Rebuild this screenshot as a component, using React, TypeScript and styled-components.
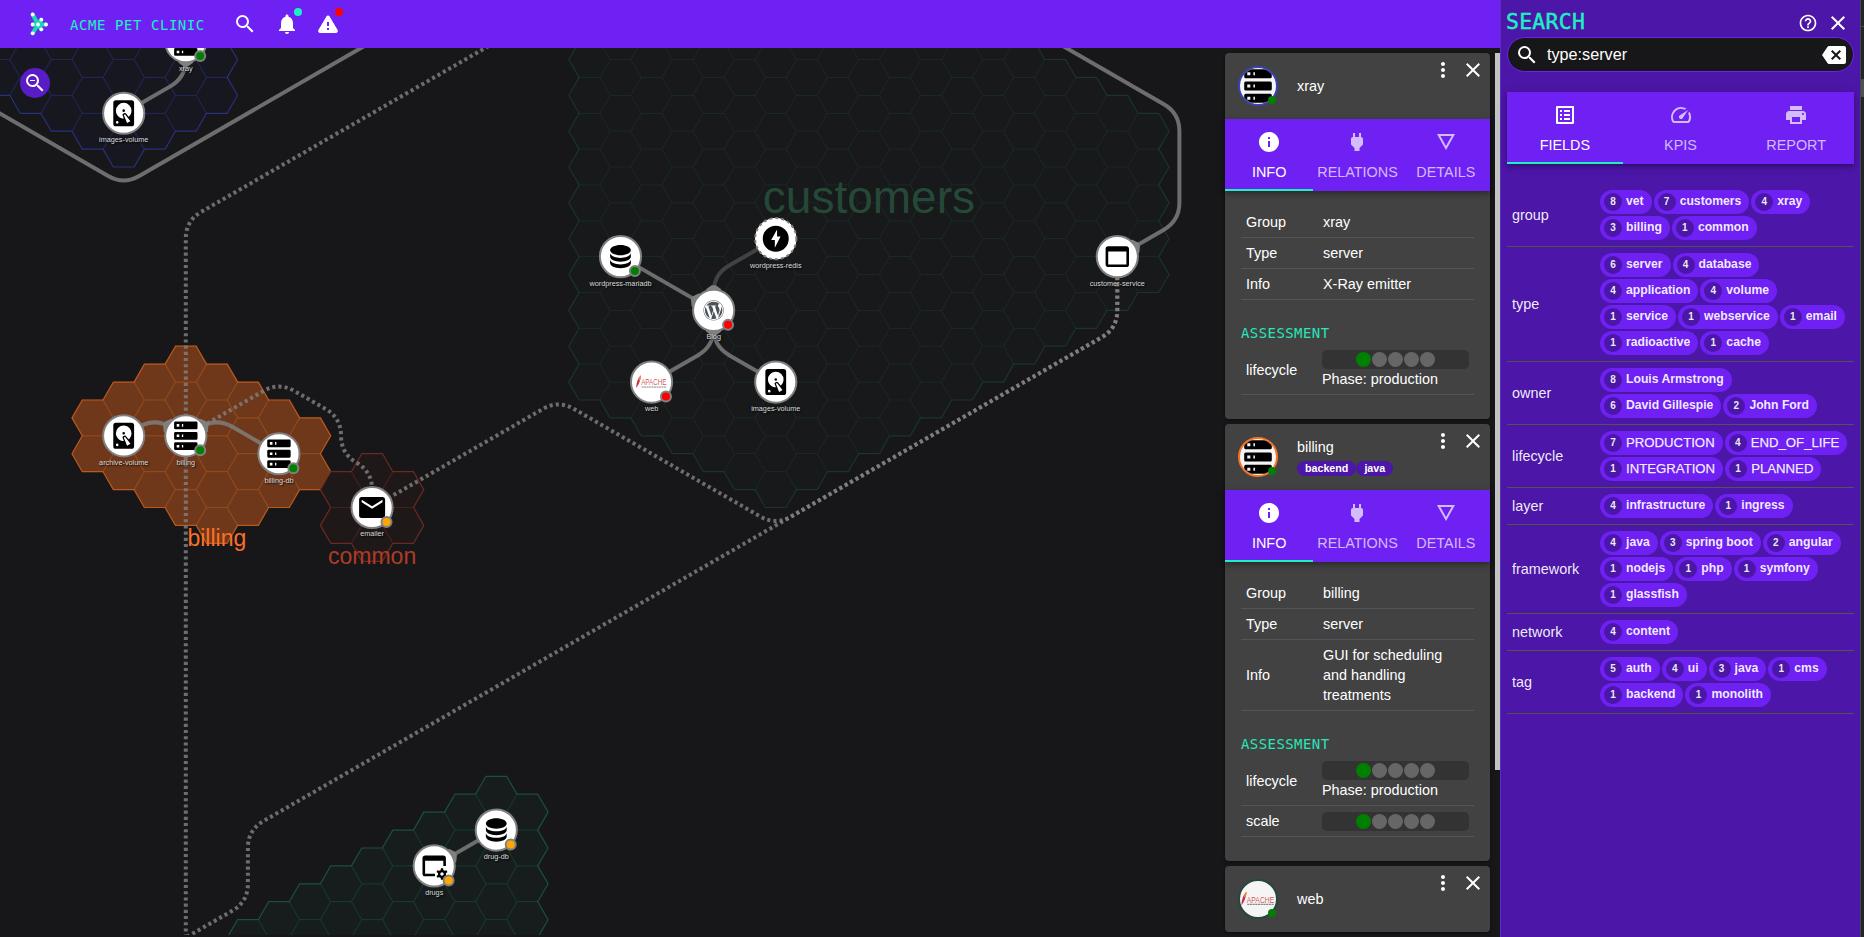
import React from 'react';
import styled, { createGlobalStyle, css } from 'styled-components';
import {
  MdSearch, MdNotifications, MdZoomOut, MdMoreVert, MdClose, MdInfo, MdPower,
  MdHelpOutline, MdBackspace, MdListAlt, MdSpeed, MdPrint,
} from 'react-icons/md';
import { FaWordpress } from 'react-icons/fa';

const violet = '#6f21f3';
const deep = '#4c16a8';
const mint = '#1df0c1';
const dark = '#171719';
const sans = '"Liberation Sans", Arial, sans-serif';
const mono = '"DejaVu Sans Mono", monospace';

const GlobalStyle = createGlobalStyle`
  * { box-sizing: border-box; }
  body { margin: 0; background: ${dark}; font-family: ${sans}; font-size: 14.4px; color: #fff; overflow: hidden; }
`;

/* ---------- page frame ---------- */

const Page = styled.div`
  display: flex;
  width: 1864px;
  height: 937px;
  background: ${dark};
`;

const Workspace = styled.div`
  display: flex;
  flex-direction: column;
  flex: 1;
  min-width: 0;
`;

const TopBar = styled.header`
  display: flex;
  align-items: center;
  height: 48px;
  flex: none;
  padding-left: 27px;
  background: ${violet};
`;

const BrandName = styled.h1`
  margin: 1px 0 0 19px;
  width: 163px;
  font: 400 14px/20px ${mono};
  letter-spacing: 0.56px;
  color: ${mint};
  white-space: nowrap;
`;

const BarButton = styled.button<{ $gap?: number }>`
  position: relative;
  display: flex;
  margin: 0 ${p => p.$gap ?? 18}px 0 0;
  padding: 0;
  border: 0;
  background: none;
  color: #fff;
`;

const Badge = styled.i<{ $color: string }>`
  position: absolute;
  top: -4px;
  right: -3px;
  width: 8px;
  height: 8px;
  border-radius: 50%;
  background: ${p => p.$color};
`;

const Stage = styled.main`
  position: relative;
  display: flex;
  justify-content: flex-end;
  flex: 1;
  min-height: 0;
  overflow: hidden;
`;

const Canvas = styled.svg`
  position: absolute;
  inset: 0;
  display: block;
`;

const ZoomButton = styled.button`
  position: absolute;
  left: 20px;
  top: 20px;
  display: grid;
  place-items: center;
  width: 30px;
  height: 30px;
  padding: 0;
  border: 0;
  border-radius: 50%;
  background: #5a1cc6;
  color: #fff;
`;

/* ---------- topology ---------- */

const COL = 31.05;
const ROW = 17.92;
const px = (c: number) => 123.7 + COL * c;
const py = (k: number) => 113.25 + ROW * k;

type Column = [col: number, from: number, to: number];

interface Region {
  fill: string;
  inner: string;
  outer: string;
  columns: Column[];
}

const regions: Region[] = [
  {
    fill: '#171720', inner: '#20264f', outer: '#28317c',
    columns: [[-4, -6, -2], [-3, -5, -1], [-2, -6, 0], [-1, -5, 1], [0, -6, 2], [1, -5, 1], [2, -6, 0], [3, -5, -1]],
  },
  {
    fill: '#17191b', inner: '#1a2726', outer: '#1a342e',
    columns: [
      [15, -5, 15], [16, -6, 16], [17, -5, 17], [18, -6, 18], [19, -5, 19], [20, -6, 20], [21, -5, 21],
      [22, -6, 20], [23, -5, 19], [24, -6, 18], [25, -5, 17], [26, -6, 16], [27, -5, 15], [28, -6, 14],
      [29, -3, 13], [30, -2, 12], [31, -1, 11], [32, 0, 10], [33, 1, 9],
    ],
  },
  {
    fill: '#6f381b', inner: '#91491e', outer: '#b9591f',
    columns: [[-1, 17, 19], [0, 16, 20], [1, 15, 21], [2, 14, 22], [3, 15, 23], [4, 16, 22], [5, 17, 21], [6, 18, 20]],
  },
  {
    fill: '#1e1819', inner: '#46201e', outer: '#6b2a22',
    columns: [[7, 21, 23], [8, 20, 24], [9, 21, 23]],
  },
  {
    fill: '#171c1c', inner: '#17382c', outer: '#1a5239',
    columns: [[4, 46, 48], [5, 45, 47], [6, 44, 48], [7, 43, 47], [8, 42, 48], [9, 41, 47], [10, 40, 48], [11, 39, 47], [12, 38, 48], [13, 39, 47]],
  },
];

function HexRegion({ region }: { region: Region }) {
  const size = COL / 1.5;
  const edges = new Map<string, { d: string; n: number }>();
  let fill = '';
  region.columns.forEach(([c, from, to]) => {
    for (let k = from; k <= to; k += 2) {
      const x = px(c);
      const y = py(k);
      const pts = [
        [x + size, y], [x + size / 2, y + ROW], [x - size / 2, y + ROW],
        [x - size, y], [x - size / 2, y - ROW], [x + size / 2, y - ROW],
      ].map(([a, b]) => `${a.toFixed(1)},${b.toFixed(1)}`);
      fill += `M${pts.join('L')}Z`;
      pts.forEach((p, i) => {
        const q = pts[(i + 1) % 6];
        const mx = Math.round((parseFloat(p) + parseFloat(q)) / 2);
        const my = Math.round((parseFloat(p.split(',')[1]) + parseFloat(q.split(',')[1])) / 2);
        let key = `${mx}:${my}`;
        for (let dx = -1; dx <= 1; dx++) {
          for (let dy = -1; dy <= 1; dy++) {
            if (edges.has(`${mx + dx}:${my + dy}`)) key = `${mx + dx}:${my + dy}`;
          }
        }
        const seen = edges.get(key);
        if (seen) seen.n += 1;
        else edges.set(key, { d: `M${p}L${q}`, n: 1 });
      });
    }
  });
  const all = [...edges.values()];
  return (
    <g fill="none" strokeWidth="1.2" strokeLinecap="round">
      <path d={fill} fill={region.fill} stroke={region.fill} strokeWidth="0.5" />
      <path d={all.filter(e => e.n > 1).map(e => e.d).join('')} stroke={region.inner} />
      <path d={all.filter(e => e.n === 1).map(e => e.d).join('')} stroke={region.outer} />
    </g>
  );
}

interface Relation {
  via: [number, number][];
  dotted?: boolean;
  faint?: boolean;
  tip?: boolean;
}

const relations: Relation[] = [
  { via: [[-6, -2], [0, 4], [10, -6]] },
  { via: [[2, -4], [2, -2], [0, 0]], tip: true },
  { via: [[14, -6], [2, 6], [2, 48]], dotted: true },
  { via: [[1, 47], [4, 44], [4, 40], [21, 23], [32, 12], [32, 8]], dotted: true },
  { via: [[8, 22], [14, 16], [21, 23], [32, 12], [32, 8]], dotted: true },
  { via: [[2, 18], [5, 15], [7, 17], [7, 19], [8, 20], [8, 22]], dotted: true },
  { via: [[2, 18], [1, 17], [0, 18]], tip: true },
  { via: [[2, 18], [3, 17], [5, 19]], tip: true },
  { via: [[32, 8], [34, 6], [34, 0], [28, -6]], tip: true },
  { via: [[19, 11], [16, 8]], tip: true },
  { via: [[19, 11], [19, 9], [21, 7]], tip: true, faint: true },
  { via: [[19, 11], [19, 13], [17, 15]], tip: true },
  { via: [[19, 11], [19, 13], [21, 15]], tip: true },
  { via: [[10, 42], [12, 40]], tip: true },
];

function RelationLine({ via, dotted, faint, tip }: Relation) {
  const pts = via.map(([c, k]) => [px(c), py(k)]);
  const toward = (a: number[], b: number[], d: number) => {
    const len = Math.hypot(b[0] - a[0], b[1] - a[1]);
    return [a[0] + ((b[0] - a[0]) * d) / len, a[1] + ((b[1] - a[1]) * d) / len];
  };
  let d = `M${pts[0]}`;
  for (let i = 1; i < pts.length - 1; i++) {
    d += `L${toward(pts[i], pts[i - 1], 17.9)}Q${pts[i]} ${toward(pts[i], pts[i + 1], 17.9)}`;
  }
  d += `L${pts[pts.length - 1]}`;
  const angle = (Math.atan2(pts[1][1] - pts[0][1], pts[1][0] - pts[0][0]) * 180) / Math.PI;
  return (
    <g>
      <path
        d={d}
        fill="none"
        stroke={faint ? '#424244' : '#808080'}
        strokeOpacity={faint ? 1 : 0.82}
        strokeWidth="4"
        strokeDasharray={dotted ? '3.1 3.1' : undefined}
      />
      {tip && (
        <path
          d="M17,-9L21.5,-7L25,-2V2L21.5,7L17,9Z"
          fill="#808080"
          transform={`translate(${pts[0]}) rotate(${angle})`}
        />
      )}
    </g>
  );
}

const glyphs = {
  disk: 'M6,2H18A2,2 0 0,1 20,4V20A2,2 0 0,1 18,22H6A2,2 0 0,1 4,20V4A2,2 0 0,1 6,2M12,4A6,6 0 0,0 6,10C6,13.31 8.69,16 12.1,16L11.22,13.77C10.95,13.29 11.11,12.68 11.59,12.4L12.45,11.9C12.93,11.63 13.54,11.79 13.82,12.27L15.74,14.69C17.12,13.59 18,11.9 18,10A6,6 0 0,0 12,4M12,9A1,1 0 0,1 13,10A1,1 0 0,1 12,11A1,1 0 0,1 11,10A1,1 0 0,1 12,9M7,18A1,1 0 0,0 6,19A1,1 0 0,0 7,20A1,1 0 0,0 8,19A1,1 0 0,0 7,18M12.09,13.27L14.58,19.58L17.17,18.08L12.95,12.77L12.09,13.27Z',
  database: 'M12,3C7.58,3 4,4.79 4,7C4,9.21 7.58,11 12,11C16.42,11 20,9.21 20,7C20,4.79 16.42,3 12,3M4,9V12C4,14.21 7.58,16 12,16C16.42,16 20,14.21 20,12V9C20,11.21 16.42,13 12,13C7.58,13 4,11.21 4,9M4,14V17C4,19.21 7.58,21 12,21C16.42,21 20,19.21 20,17V14C20,16.21 16.42,18 12,18C7.58,18 4,16.21 4,14Z',
  server: 'M4,1H20A1,1 0 0,1 21,2V6A1,1 0 0,1 20,7H4A1,1 0 0,1 3,6V2A1,1 0 0,1 4,1M4,9H20A1,1 0 0,1 21,10V14A1,1 0 0,1 20,15H4A1,1 0 0,1 3,14V10A1,1 0 0,1 4,9M4,17H20A1,1 0 0,1 21,18V22A1,1 0 0,1 20,23H4A1,1 0 0,1 3,22V18A1,1 0 0,1 4,17M9,5H10V3H9V5M9,13H10V11H9V13M9,21H10V19H9V21M5,3V5H7V3H5M5,11V13H7V11H5M5,19V21H7V19H5Z',
  email: 'M20,8L12,13L4,8V6L12,11L20,6M20,4H4C2.89,4 2,4.89 2,6V18A2,2 0 0,0 4,20H20A2,2 0 0,0 22,18V6C22,4.89 21.1,4 20,4Z',
  window: 'M19,4C20.11,4 21,4.9 21,6V18A2,2 0 0,1 19,20H5C3.89,20 3,19.1 3,18V6A2,2 0 0,1 5,4H19M19,18V8H5V18H19Z',
  flash: 'M12,2A10,10 0 0,1 22,12A10,10 0 0,1 12,22A10,10 0 0,1 2,12A10,10 0 0,1 12,2M13,5L8.5,13H11.3V19L15.7,10.4H13V5Z',
  windowPart: 'M21,12V6A2,2 0 0,0 19,4H5C3.89,4 3,4.9 3,6V18A2,2 0 0,0 5,20H12.6V18H5V8H19V12Z',
};

type Glyph = keyof typeof glyphs | 'gear' | 'wordpress' | 'apache';

const Caption = styled.text<{ $size?: number; $color?: string }>`
  font-family: ${sans};
  font-size: ${p => p.$size ?? 7.25}px;
  fill: ${p => p.$color ?? '#dadada'};
  text-anchor: middle;
  ${p => !p.$size && css`text-shadow: 1px 1px 2px #000;`}
`;

const ApacheName = styled.text`
  font-family: ${sans};
  font-size: 8.2px;
  fill: #cf3438;
  fill-opacity: 0.85;
`;

function NodeGlyph({ kind }: { kind: Glyph }) {
  if (kind === 'wordpress') return <FaWordpress x={-10.5} y={-10.5} size={21} color="#4c545a" />;
  if (kind === 'apache') {
    return (
      <g>
        <path d="M-15.4,6C-15.2,1 -13.8,-4 -10.6,-6.8C-11,-2 -12.6,2.6 -15.4,6Z" fill="#cf2a55" />
        <path d="M-13,-2.5C-12.4,-4.6 -11.6,-6 -10.6,-6.8C-10.6,-4.5 -11,-3 -11.8,-1Z" fill="#ee8b2c" />
        <ApacheName transform="translate(-10.4 3.4) scale(0.77 1)">APACHE</ApacheName>
        <path d="M-10,5H15" stroke="#888" strokeWidth="1" strokeDasharray="2 0.5" />
      </g>
    );
  }
  if (kind === 'gear') {
    return (
      <g transform="translate(-15.6 -15.6) scale(1.3)">
        <path d={glyphs.windowPart} />
        <g transform="translate(18 18.2)">
          <circle r="2.2" fill="none" stroke="#000" strokeWidth="1.8" />
          {[0, 60, 120, 180, 240, 300].map(a => (
            <path key={a} d="M-1.1,-2.6L-0.8,-4.4H0.8L1.1,-2.6Z" transform={`rotate(${a})`} />
          ))}
        </g>
      </g>
    );
  }
  return <path d={glyphs[kind]} fillRule="evenodd" transform="translate(-15.6 -15.6) scale(1.3)" />;
}

interface TopoNode {
  at: [number, number];
  name: string;
  glyph: Glyph;
  status?: string;
  dashed?: boolean;
}

const nodes: TopoNode[] = [
  { at: [2, -4], name: 'xray', glyph: 'server', status: 'green' },
  { at: [0, 0], name: 'images-volume', glyph: 'disk' },
  { at: [0, 18], name: 'archive-volume', glyph: 'disk' },
  { at: [2, 18], name: 'billing', glyph: 'server', status: 'green' },
  { at: [5, 19], name: 'billing-db', glyph: 'server', status: 'green' },
  { at: [8, 22], name: 'emailer', glyph: 'email', status: 'orange' },
  { at: [16, 8], name: 'wordpress-mariadb', glyph: 'database', status: 'green' },
  { at: [21, 7], name: 'wordpress-redis', glyph: 'flash', dashed: true },
  { at: [19, 11], name: 'Blog', glyph: 'wordpress', status: 'red' },
  { at: [17, 15], name: 'web', glyph: 'apache', status: 'red' },
  { at: [21, 15], name: 'images-volume', glyph: 'disk' },
  { at: [32, 8], name: 'customer-service', glyph: 'window' },
  { at: [12, 40], name: 'drug-db', glyph: 'database', status: 'orange' },
  { at: [10, 42], name: 'drugs', glyph: 'gear', status: 'orange' },
];

function Topology() {
  return (
    <Canvas width="1500" height="887" viewBox="0 48 1500 887">
      {regions.map((r, i) => <HexRegion key={i} region={r} />)}
      {relations.map((r, i) => <RelationLine key={i} {...r} />)}
      {nodes.map((n, i) => (
        <g key={i} transform={`translate(${px(n.at[0])} ${py(n.at[1])})`}>
          {n.dashed && <circle r="20.6" fill="#fff" />}
          <circle r="20.6" fill="#fff" stroke="#808080" strokeWidth="2" strokeDasharray={n.dashed ? '3 3' : undefined} />
          <NodeGlyph kind={n.glyph} />
          {n.status && <circle cx="14.4" cy="14.5" r="5" fill={n.status} stroke="#808080" strokeWidth="2" />}
          <Caption y="29">{n.name}</Caption>
        </g>
      ))}
      <Caption $size={46} $color="#254837" x={px(24)} y="212.7">customers</Caption>
      <Caption $size={23} $color="#fb7026" x={px(3)} y="546">billing</Caption>
      <Caption $size={23} $color="#b03a28" x={px(8)} y="564">common</Caption>
    </Canvas>
  );
}

/* ---------- tabs ---------- */

const TabBar = styled.nav`
  position: relative;
  display: flex;
  height: 72px;
  background: ${violet};
  box-shadow: 0 2px 4px -1px rgba(0, 0, 0, 0.2), 0 4px 5px rgba(0, 0, 0, 0.14), 0 1px 10px rgba(0, 0, 0, 0.12);
`;

const TabItem = styled.div<{ $active?: boolean }>`
  display: flex;
  flex-direction: column;
  align-items: center;
  flex: 1 1 0;
  min-width: 0;
  padding-top: 11px;
  border-bottom: 2px solid ${p => (p.$active ? mint : 'transparent')};
  color: ${p => (p.$active ? '#fff' : 'rgba(255, 255, 255, 0.7)')};
  line-height: 20px;
  white-space: nowrap;

  svg { margin-bottom: 8px; flex: none; }
`;

function Tabs({ items }: { items: [React.ReactNode, string][] }) {
  return (
    <TabBar>
      {items.map(([icon, label], i) => (
        <TabItem key={label} $active={i === 0}>
          {icon}
          {label}
        </TabItem>
      ))}
    </TabBar>
  );
}

/* ---------- detail cards ---------- */

const CardList = styled.section`
  position: relative;
  display: flex;
  flex-direction: column;
  gap: 5px;
  width: 265px;
  padding-top: 5px;
`;

const ScrollRail = styled.div`
  position: relative;
  width: 5px;
  margin: 5px 0 0 5px;
`;

const ScrollThumb = styled.div`
  height: 717px;
  background: #c4c4c4;
`;

const Card = styled.article`
  flex: none;
  border-radius: 4px;
  background: #424242;
  box-shadow: 0 1px 3px rgba(0, 0, 0, 0.5);
`;

const CardHead = styled.div`
  display: flex;
  align-items: center;
  height: 66px;
  padding: 0 5px 0 13px;
`;

const Avatar = styled.div<{ $ring: string }>`
  position: relative;
  width: 40px;
  height: 40px;
  border: 2px solid ${p => p.$ring};
  border-radius: 50%;
  background: #f5f5f5;
`;

const AvatarArt = styled.svg`
  display: block;
  width: 36px;
  height: 36px;
  border-radius: 50%;
`;

const AvatarDot = styled.i`
  position: absolute;
  right: 0;
  bottom: 0;
  width: 8px;
  height: 8px;
  border-radius: 50%;
  background: green;
`;

const CardTitle = styled.div`
  flex: 1;
  margin-left: 19px;
  line-height: 18px;
`;

const TagRow = styled.div`
  display: flex;
  margin-top: 5px;
`;

const Tag = styled.span`
  height: 15px;
  padding: 0 8px;
  border-radius: 8px;
  background: ${deep};
  font-weight: bold;
  font-size: 10.7px;
  line-height: 15px;
`;

const CardActions = styled.div`
  display: flex;
  gap: 6px;
  align-self: flex-start;
  margin-top: 5px;
`;

const CardBody = styled.div`
  padding: 16px 16px 24px;
`;

const FactRow = styled.div`
  display: flex;
  align-items: center;
  padding: 5px;
  border-bottom: 1px solid #555557;
  line-height: 20px;
`;

const FactName = styled.div<{ $low?: boolean }>`
  width: 77px;
  flex: none;
  padding-top: ${p => (p.$low ? 1 : 0)}px;
`;

const FactValue = styled.div`
  width: 120px;
`;

const Heading = styled.h2`
  margin: 25px 0 4px;
  font: 400 14px/16px ${mono};
  letter-spacing: 0.42px;
  color: #27e6ba;
`;

const Score = styled.div`
  width: 147px;
  margin-left: -1px;
`;

const Meter = styled.div`
  display: flex;
  justify-content: center;
  gap: 1px;
  height: 19px;
  padding-top: 2px;
  border-radius: 5px;
  background: #333;
`;

const Pip = styled.i<{ $on?: boolean }>`
  width: 15px;
  height: 15px;
  border-radius: 50%;
  background: ${p => (p.$on ? 'green' : '#666')};
`;

function NablaIcon() {
  return (
    <svg width="24" height="24" viewBox="0 0 24 24" fill="currentColor">
      <path fillRule="evenodd" d="M3,4L12,20L21,4ZM6.38,6H17.63L12,16Z" />
    </svg>
  );
}

const cardTabs: [React.ReactNode, string][] = [
  [<MdInfo size={24} />, 'INFO'],
  [<MdPower size={24} />, 'RELATIONS'],
  [<NablaIcon />, 'DETAILS'],
];

interface Detail {
  name: string;
  ring: string;
  glyph: Glyph;
  tags?: string[];
  facts?: [string, string][];
  scores?: [string, string?][];
}

const details: Detail[] = [
  {
    name: 'xray', ring: '#3b44b0', glyph: 'server',
    facts: [['Group', 'xray'], ['Type', 'server'], ['Info', 'X-Ray emitter']],
    scores: [['lifecycle', 'Phase: production']],
  },
  {
    name: 'billing', ring: '#f57323', glyph: 'server', tags: ['backend', 'java'],
    facts: [['Group', 'billing'], ['Type', 'server'], ['Info', 'GUI for scheduling and handling treatments']],
    scores: [['lifecycle', 'Phase: production'], ['scale']],
  },
  { name: 'web', ring: '#25483a', glyph: 'apache' },
];

function DetailCard({ detail }: { detail: Detail }) {
  return (
    <Card>
      <CardHead>
        <Avatar $ring={detail.ring}>
          <AvatarArt viewBox="-18 -18 36 36">
            <g transform={detail.glyph === 'server' ? 'scale(1.18)' : 'scale(1.08)'}>
              <NodeGlyph kind={detail.glyph} />
            </g>
          </AvatarArt>
          <AvatarDot />
        </Avatar>
        <CardTitle>
          {detail.name}
          {detail.tags && <TagRow>{detail.tags.map(t => <Tag key={t}>{t}</Tag>)}</TagRow>}
        </CardTitle>
        <CardActions>
          <MdMoreVert size={24} />
          <MdClose size={24} />
        </CardActions>
      </CardHead>
      {detail.facts && (
        <>
          <Tabs items={cardTabs} />
          <CardBody>
            {detail.facts.map(([k, v]) => (
              <FactRow key={k}>
                <FactName>{k}</FactName>
                <FactValue>{v}</FactValue>
              </FactRow>
            ))}
            <Heading>ASSESSMENT</Heading>
            {detail.scores?.map(([k, phase]) => (
              <FactRow key={k}>
                <FactName $low={Boolean(phase)}>{k}</FactName>
                <Score>
                  <Meter>
                    {[0, 1, 2, 3, 4].map(i => <Pip key={i} $on={i === 0} />)}
                  </Meter>
                  {phase && <div>{phase}</div>}
                </Score>
              </FactRow>
            ))}
          </CardBody>
        </>
      )}
    </Card>
  );
}

/* ---------- search panel ---------- */

const SearchPanel = styled.aside`
  width: 361px;
  flex: none;
  padding: 8px 6px 0 6px;
  border-left: 1px solid #5a30b8;
  border-right: 1px solid #47474c;
  background: ${deep};
`;

const PanelHead = styled.div`
  display: flex;
  align-items: center;
  height: 29px;
  padding-right: 4px;
`;

const PanelTitle = styled.h2`
  flex: 1;
  margin: -2px 0 0 -1px;
  font: 400 21.4px/28px ${mono};
  letter-spacing: 0.3px;
  color: ${mint};
  -webkit-text-stroke: 0.45px ${mint};
`;

const CloseSlot = styled.span`
  display: flex;
  margin-left: 8px;
`;

const SearchField = styled.div`
  display: flex;
  align-items: center;
  height: 35px;
  padding: 0 7px;
  border: 1px solid ${violet};
  border-radius: 18px;
  background: ${dark};
  font-size: 16.2px;
`;

const Query = styled.span`
  flex: 1;
  margin-left: 8px;
`;

const PanelTabs = styled.div`
  margin: 20px 0;
`;

const FieldRow = styled.div`
  display: flex;
  align-items: center;
  padding: 5px 0 5px 5px;
  border-bottom: 1px solid #56534f;
`;

const FieldName = styled.div`
  width: 87px;
  flex: none;
  color: rgba(255, 255, 255, 0.93);
`;

const ChipLine = styled.div`
  display: flex;
`;

const Chip = styled.span`
  display: flex;
  align-items: center;
  height: 24px;
  margin: 1px;
  padding: 0 8px 0 4px;
  border-radius: 12px;
  background: ${violet};
  color: rgba(255, 255, 255, 0.92);
  white-space: nowrap;
`;

const ChipLabel = styled.span<{ $upper?: boolean }>`
  margin-top: -1.5px;
  font-weight: ${p => (p.$upper ? 400 : 700)};
  font-size: ${p => (p.$upper ? 13.2 : 12.2)}px;
  ${p => p.$upper && css`-webkit-text-stroke: 0.25px rgba(255, 255, 255, 0.8);`}
`;

const Count = styled.b`
  display: grid;
  place-items: center;
  width: 18px;
  height: 18px;
  margin-right: 4px;
  padding-bottom: 1px;
  border-radius: 50%;
  background: ${deep};
  font-weight: 700;
  font-size: 10px;
`;

const EdgeStrip = styled.div`
  display: flex;
  flex-direction: column;
  width: 3px;
  flex: none;
  background: #242427;
`;

const EdgeGap = styled.div<{ $height: number }>`
  height: ${p => p.$height}px;
  border-bottom: 1px solid #4a4a4d;
`;

const EdgeThumb = styled.div`
  height: 17px;
  background: #505053;
`;

type FieldData = [name: string, lines: [number, string][][]];

const fields: FieldData[] = [
  ['group', [[[8, 'vet'], [7, 'customers'], [4, 'xray']], [[3, 'billing'], [1, 'common']]]],
  ['type', [
    [[6, 'server'], [4, 'database']],
    [[4, 'application'], [4, 'volume']],
    [[1, 'service'], [1, 'webservice'], [1, 'email']],
    [[1, 'radioactive'], [1, 'cache']],
  ]],
  ['owner', [[[8, 'Louis Armstrong']], [[6, 'David Gillespie'], [2, 'John Ford']]]],
  ['lifecycle', [[[7, 'PRODUCTION'], [4, 'END_OF_LIFE']], [[1, 'INTEGRATION'], [1, 'PLANNED']]]],
  ['layer', [[[4, 'infrastructure'], [1, 'ingress']]]],
  ['framework', [
    [[4, 'java'], [3, 'spring boot'], [2, 'angular']],
    [[1, 'nodejs'], [1, 'php'], [1, 'symfony']],
    [[1, 'glassfish']],
  ]],
  ['network', [[[4, 'content']]]],
  ['tag', [[[5, 'auth'], [4, 'ui'], [3, 'java'], [1, 'cms']], [[1, 'backend'], [1, 'monolith']]]],
];

const searchTabs: [React.ReactNode, string][] = [
  [<MdListAlt size={24} />, 'FIELDS'],
  [<MdSpeed size={24} />, 'KPIS'],
  [<MdPrint size={24} />, 'REPORT'],
];

/* ---------- header drawings ---------- */

function Logo() {
  const dots = [[5.7, 3.5], [14.3, 8.7], [5.7, 13.5], [11, 13.5], [19, 13.5], [14.3, 18.3], [5.7, 22.3]];
  return (
    <svg width="24" height="26" viewBox="0 0 24 26">
      <path
        d="M5.7,3.5L11,13.5L5.7,22.3M5.7,13.5H19M14.3,8.7L11,13.5L14.3,18.3"
        fill="none" stroke="#17d9b4" strokeWidth="4" strokeLinejoin="round" strokeLinecap="round"
      />
      {dots.map(([x, y]) => <circle key={`${x}${y}`} cx={x} cy={y} r="1.9" fill="#f2fffc" />)}
    </svg>
  );
}

function AlertTriangle() {
  return (
    <svg width="24" height="24" viewBox="0 0 24 24" fill="#fff">
      <path
        fillRule="evenodd"
        d="M4.3,21H19.7A2,2 0 0,0 21.6,18L13.6,4.4A1.9,1.9 0 0,0 10.4,4.4L2.4,18A2,2 0 0,0 4.3,21ZM13,14H11V10H13ZM13,18H11V16H13Z"
      />
    </svg>
  );
}

export default function App() {
  return (
    <Page>
      <GlobalStyle />
      <Workspace>
        <TopBar>
          <Logo />
          <BrandName>ACME PET CLINIC</BrandName>
          <BarButton><MdSearch size={24} /></BarButton>
          <BarButton $gap={17}><MdNotifications size={24} /><Badge $color={mint} /></BarButton>
          <BarButton><AlertTriangle /><Badge $color="#f00" /></BarButton>
        </TopBar>
        <Stage>
          <Topology />
          <ZoomButton><MdZoomOut size={24} /></ZoomButton>
          <CardList>
            {details.map(d => <DetailCard key={d.name} detail={d} />)}
          </CardList>
          <ScrollRail><ScrollThumb /></ScrollRail>
        </Stage>
      </Workspace>
      <SearchPanel>
        <PanelHead>
          <PanelTitle>SEARCH</PanelTitle>
          <MdHelpOutline size={20} />
          <CloseSlot><MdClose size={24} /></CloseSlot>
        </PanelHead>
        <SearchField>
          <MdSearch size={24} />
          <Query>type:server</Query>
          <MdBackspace size={24} />
        </SearchField>
        <PanelTabs>
          <Tabs items={searchTabs} />
        </PanelTabs>
        {fields.map(([name, lines]) => (
          <FieldRow key={name}>
            <FieldName>{name}</FieldName>
            <div>
              {lines.map((line, i) => (
                <ChipLine key={i}>
                  {line.map(([n, label]) => (
                    <Chip key={label}>
                      <Count>{n}</Count>
                      <ChipLabel $upper={label === label.toUpperCase()}>{label}</ChipLabel>
                    </Chip>
                  ))}
                </ChipLine>
              ))}
            </div>
          </FieldRow>
        ))}
      </SearchPanel>
      <EdgeStrip>
        <EdgeGap $height={27} />
        <EdgeGap $height={53} />
        <EdgeThumb />
      </EdgeStrip>
    </Page>
  );
}
